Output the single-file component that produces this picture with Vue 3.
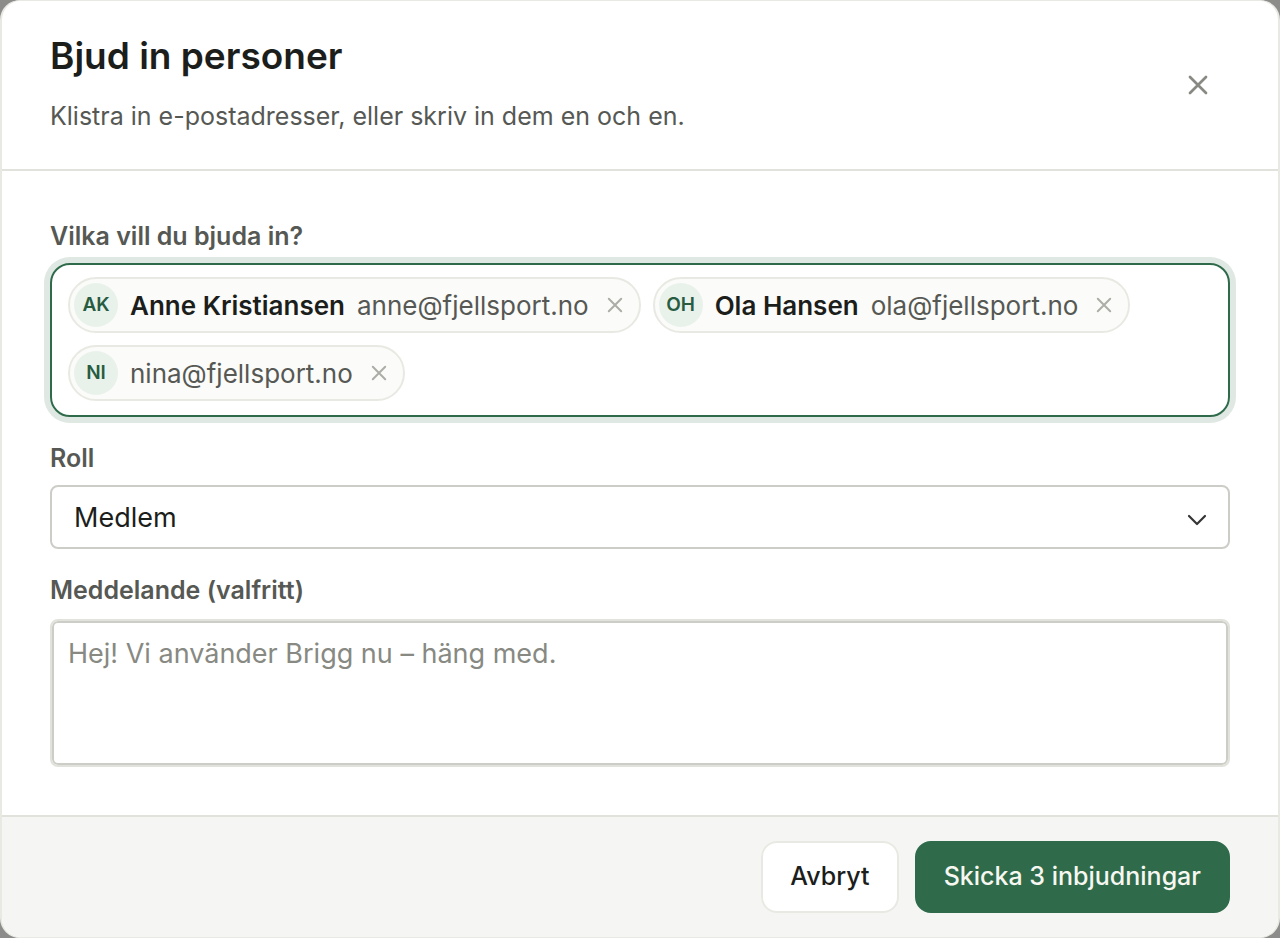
<template>
  <div class="backdrop">
    <form class="dialog" role="dialog" aria-labelledby="dialog-title" @submit.prevent>
      <!-- Header -->
      <header class="dialog-header">
        <div class="heading">
          <h1 id="dialog-title">Bjud in personer</h1>
          <p>Klistra in e-postadresser, eller skriv in dem en och en.</p>
        </div>
        <button class="close-btn" type="button" aria-label="Stäng">
          <svg width="22" height="22" viewBox="0 0 22 22">
            <path d="M3 3 19 19M19 3 3 19" />
          </svg>
        </button>
      </header>

      <!-- Fields -->
      <div class="dialog-body">
        <div class="field">
          <label for="invite-email">Vilka vill du bjuda in?</label>
          <div class="people">
            <div v-for="person in people" :key="person.email" class="chip">
              <span class="avatar">{{ person.initials }}</span>
              <strong v-if="person.name">{{ person.name }}</strong>
              <span class="email">{{ person.email }}</span>
              <button
                class="remove-btn"
                type="button"
                :aria-label="`Ta bort ${person.email}`"
                @click="removePerson(person.email)"
              >
                <svg width="16" height="16" viewBox="0 0 16 16">
                  <path d="M1.8 1.8 14.2 14.2M14.2 1.8 1.8 14.2" />
                </svg>
              </button>
            </div>
            <input
              id="invite-email"
              v-model="draft"
              type="text"
              autocomplete="off"
              @keydown.enter.prevent="addPerson"
            >
          </div>
        </div>

        <div class="field">
          <label for="invite-role">Roll</label>
          <div class="select-wrap">
            <select id="invite-role" v-model="role">
              <option>Medlem</option>
              <option>Administratör</option>
              <option>Gäst</option>
            </select>
            <svg class="chevron" width="22" height="14" viewBox="0 0 22 14">
              <path d="M3 3 11 11 19 3" />
            </svg>
          </div>
        </div>

        <div class="field message">
          <label for="invite-message">Meddelande (valfritt)</label>
          <textarea
            id="invite-message"
            v-model="message"
            placeholder="Hej! Vi använder Brigg nu – häng med."
          ></textarea>
        </div>
      </div>

      <!-- Actions -->
      <footer class="dialog-footer">
        <button class="btn" type="button">Avbryt</button>
        <button class="btn primary" type="submit">Skicka {{ people.length }} inbjudningar</button>
      </footer>
    </form>
  </div>
</template>

<script setup>
import { ref } from 'vue'

const people = ref([
  { initials: 'AK', name: 'Anne Kristiansen', email: 'anne@fjellsport.no' },
  { initials: 'OH', name: 'Ola Hansen', email: 'ola@fjellsport.no' },
  { initials: 'NI', name: '', email: 'nina@fjellsport.no' }
])
const draft = ref('')
const role = ref('Medlem')
const message = ref('')

const addPerson = () => {
  const email = draft.value.trim()
  if (!email || people.value.some((p) => p.email === email)) return
  people.value.push({ initials: email.slice(0, 2).toUpperCase(), name: '', email })
  draft.value = ''
}

const removePerson = (email) => {
  people.value = people.value.filter((p) => p.email !== email)
}
</script>

<style>
body {
  margin: 0;
  background: #8c8c8a;
}
</style>

<style scoped>
.backdrop {
  display: flex;
  min-height: 100vh;
  font-family: Inter, "Liberation Sans", sans-serif;
  color: #1c1e1c;
}

.dialog {
  flex: 1;
  min-width: 0;
  display: flex;
  flex-direction: column;
  box-sizing: border-box;
  border: 2px solid #e9e9e4;
  border-top-width: 1px;
  border-bottom-width: 1px;
  border-radius: 20px;
  background: #fff;
  overflow: hidden;
}

button,
input,
select,
textarea {
  font-family: inherit;
  color: inherit;
}

svg {
  display: block;
  fill: none;
  stroke: currentColor;
  stroke-linecap: round;
  stroke-linejoin: round;
}

/* Header */
.dialog-header {
  display: flex;
  align-items: center;
  justify-content: space-between;
  padding: 32px 48px;
  border-bottom: 2px solid #e1e2db;
}

.heading {
  display: flex;
  flex-direction: column;
  gap: 18px;
  padding-bottom: 2px;
}

h1 {
  margin: 0;
  font-size: 37px;
  line-height: 46px;
  font-weight: 600;
}

p {
  margin: 0;
  font-size: 25px;
  line-height: 38px;
  color: #565854;
}

.close-btn {
  display: flex;
  align-items: center;
  justify-content: center;
  width: 64px;
  height: 64px;
  padding: 0;
  border: 0;
  background: none;
  color: #878982;
  stroke-width: 2.7;
  cursor: pointer;
}

/* Fields */
.dialog-body {
  flex: 1;
  display: flex;
  flex-direction: column;
  gap: 24px;
  padding: 48px;
}

.field {
  display: flex;
  flex-direction: column;
  gap: 10px;
}

.field.message {
  gap: 12px;
}

label {
  font-size: 25px;
  line-height: 34px;
  font-weight: 600;
  color: #565854;
}

.people {
  display: flex;
  flex-wrap: wrap;
  gap: 12px;
  padding: 12px 16px 14px;
  border: 2px solid #2f6b4a;
  border-radius: 20px;
  box-shadow: 0 0 0 6px #dfe8e3;
}

.people input {
  flex: 1;
  min-width: 120px;
  padding: 0;
  border: 0;
  outline: none;
  background: none;
  font-size: 26px;
}

.chip {
  display: flex;
  align-items: center;
  gap: 12px;
  box-sizing: border-box;
  height: 56px;
  padding: 0 10px 0 4px;
  border: 2px solid #e9e9e4;
  border-radius: 28px;
  background: #fbfbf9;
  font-size: 26px;
  line-height: 36px;
}

.chip strong,
.email {
  padding-top: 2px;
}

.chip strong {
  font-weight: 600;
}

.avatar {
  width: 44px;
  border-radius: 50%;
  background: #e8f2eb;
  color: #285c40;
  font-size: 19px;
  line-height: 44px;
  font-weight: 600;
  text-align: center;
}

.email {
  color: #565854;
}

.remove-btn {
  display: flex;
  align-items: center;
  justify-content: center;
  width: 28px;
  height: 28px;
  padding: 0;
  border: 0;
  background: none;
  color: #abada6;
  stroke-width: 2px;
  cursor: pointer;
}

.select-wrap {
  display: grid;
  align-items: center;
}

.select-wrap > * {
  grid-area: 1 / 1;
}

select {
  appearance: none;
  width: 100%;
  height: 64px;
  padding: 0 64px 0 22px;
  border: 2px solid #cdcdc8;
  border-radius: 8px;
  background: #fff;
  font-size: 27px;
}

.chevron {
  justify-self: end;
  margin: 6px 22px 0 0;
  color: #333532;
  stroke-width: 2.2;
  pointer-events: none;
}

textarea {
  box-sizing: border-box;
  height: 148px;
  padding: 12px 16px;
  border: 2px solid #e1e2db;
  border-radius: 8px;
  box-shadow: inset 0 0 0 2px #cdcdc8;
  outline: none;
  resize: none;
  background: #fff;
  font-size: 27px;
  line-height: 42px;
}

textarea::placeholder {
  color: #878982;
}

/* Actions */
.dialog-footer {
  display: flex;
  justify-content: flex-end;
  gap: 16px;
  padding: 24px 48px;
  border-top: 2px solid #e1e2db;
  background: #f5f5f3;
}

.btn {
  height: 72px;
  padding: 0 27px 2px;
  border: 2px solid #e9e9e4;
  border-radius: 16px;
  background: #fff;
  font-size: 25px;
  font-weight: 500;
  cursor: pointer;
}

.btn.primary {
  border-color: #2f6b4a;
  background: #2f6b4a;
  color: #f7f7f2;
}
</style>
